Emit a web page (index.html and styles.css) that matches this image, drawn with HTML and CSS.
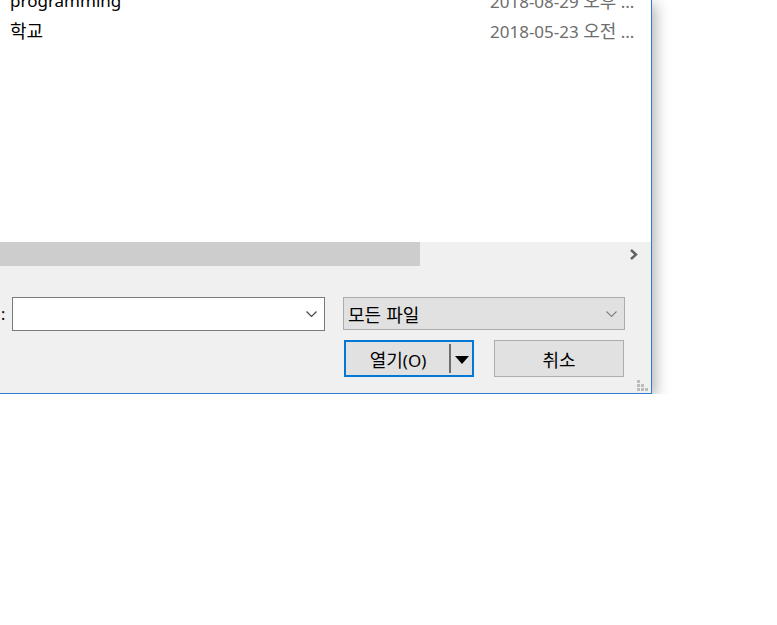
FILE: index.html
```html
<!DOCTYPE html>
<html lang="ko">
<head>
<meta charset="utf-8">
<title>열기</title>
<link rel="stylesheet" href="styles.css">
</head>
<body>
<div class="dialog">
  <div class="list">
    <div class="rows">
      <div class="row"><span class="name">programming</span><span class="date">2018-08-29 <span class="ko">오후</span> ...</span></div>
      <div class="row"><span class="name"><span class="ko">학교</span></span><span class="date">2018-05-23 <span class="ko">오전</span> ...</span></div>
    </div>
  </div>
  <div class="hscroll">
    <div class="thumb"></div>
    <div class="track"></div>
    <div class="arrow">
      <svg width="10" height="11" viewBox="0 0 10 11"><path d="M2 1 L7 5.5 L2 10" fill="none" stroke="#606060" stroke-width="2.4"/></svg>
    </div>
  </div>
  <div class="bottom">
    <div class="fields">
      <span class="label">:</span>
      <div class="combo name-combo">
        <svg class="chev" width="11" height="7" viewBox="0 0 11 7"><path d="M0.5 0.5 L5.5 5.5 L10.5 0.5" fill="none" stroke="#444" stroke-width="1.2"/></svg>
      </div>
      <div class="combo type-combo">
        <span class="type-text ko">모든 파일</span>
        <svg class="chev" width="11" height="7" viewBox="0 0 11 7"><path d="M0.5 0.5 L5.5 5.5 L10.5 0.5" fill="none" stroke="#808080" stroke-width="1.1"/></svg>
      </div>
    </div>
    <div class="buttons">
      <div class="btn open-btn">
        <span class="open-label"><span class="ko">열기</span>(O)</span>
        <span class="sep"></span>
        <span class="drop"><svg width="14" height="8" viewBox="0 0 14 8"><path d="M0 0 H14 L7 8 Z" fill="#000"/></svg></span>
      </div>
      <div class="btn cancel-btn"><span class="ko">취소</span></div>
    </div>
    <div class="grip">
      <i></i><i></i><i></i>
      <i class="off"></i><i></i><i></i>
      <i class="off"></i><i class="off"></i><i></i>
    </div>
  </div>
</div>
</body>
</html>
```
FILE: styles.css
```css
html, body {
  margin: 0;
  padding: 0;
  background: #ffffff;
}

body {
  font-family: "Noto Sans", "Noto Sans CJK KR", sans-serif;
  font-size: 17px;
  color: #000;
}

.ko {
  font-family: "Noto Sans CJK KR", sans-serif;
  font-size: 18px;
}

.dialog {
  position: relative;
  width: 651px;
  border-right: 1px solid #2b7cd3;
  border-bottom: 1px solid #2b7cd3;
  background: #f0f0f0;
  box-shadow: 3px 4px 14px rgba(0, 0, 0, 0.32);
  display: flex;
  flex-direction: column;
}

.list {
  height: 242px;
  background: #fff;
  overflow: hidden;
}

.rows {
  margin-top: -15px;
}

.row {
  display: flex;
  height: 30px;
  align-items: center;
  white-space: nowrap;
}

.name {
  width: 490px;
  padding-left: 10px;
  box-sizing: border-box;
  color: #000;
}

.date {
  color: #6d6d6d;
}

.hscroll {
  height: 24px;
  display: flex;
  background: #f0f0f0;
}

.thumb {
  width: 420px;
  background: #cdcdcd;
}

.track {
  flex: 1;
}

.arrow {
  width: 24px;
  display: flex;
  align-items: center;
  justify-content: flex-start;
  padding-left: 2px;
  box-sizing: border-box;
}

.bottom {
  height: 127px;
  position: relative;
  display: flex;
  flex-direction: column;
  padding-top: 31px;
  box-sizing: border-box;
}

.fields {
  display: flex;
  align-items: center;
  height: 34px;
}

.label {
  width: 12px;
  padding-left: 1px;
  box-sizing: border-box;
  line-height: 1;
  font-size: 16px;
}

.combo {
  position: relative;
  box-sizing: border-box;
  height: 34px;
  display: flex;
  align-items: center;
}

.name-combo {
  width: 313px;
  background: #fff;
  border: 1px solid #7a7a7a;
}

.type-combo {
  margin-left: 18px;
  width: 282px;
  height: 33px;
  margin-top: -1px;
  background: #e1e1e1;
  border: 1px solid #adadad;
  padding-left: 4px;
}

.chev {
  position: absolute;
  right: 7px;
  top: 13px;
}

.buttons {
  display: flex;
  margin-top: 9px;
  padding-left: 344px;
  gap: 20px;
}

.btn {
  box-sizing: border-box;
  width: 130px;
  height: 37px;
  background: #e1e1e1;
  display: flex;
  align-items: center;
}

.open-btn {
  border: 2px solid #0078d7;
}

.open-label {
  width: 103px;
  text-align: center;
  padding-left: 1px;
  box-sizing: border-box;
}

.sep {
  width: 2px;
  height: 29px;
  background: #6d6d6d;
}

.drop {
  flex: 1;
  display: flex;
  justify-content: center;
  padding-top: 2px;
}

.cancel-btn {
  border: 1px solid #adadad;
  justify-content: center;
}

.grip {
  position: absolute;
  right: 3px;
  bottom: 2px;
  display: grid;
  grid-template-columns: repeat(3, 3px);
  grid-template-rows: repeat(3, 3px);
  gap: 1px;
  transform: rotate(180deg);
}

.grip i {
  display: block;
  background: #bcbcbc;
}

.grip i.off {
  background: transparent;
}
```
